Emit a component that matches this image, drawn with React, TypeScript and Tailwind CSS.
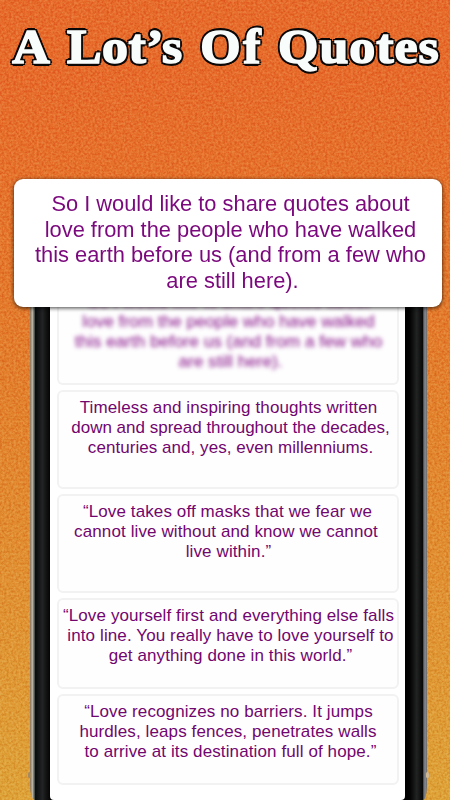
import React from "react";

type Line = { text: string; className?: string };

const INTRO: Line[] = [
  { text: "So I would like to share quotes about" },
  { text: "love from the people who have walked" },
  { text: "this earth before us (and from a few who" },
  { text: "are still here).", className: "pl-[4px]" },
];

function Grain() {
  return (
    <svg className="absolute inset-0 h-full w-full opacity-35 mix-blend-soft-light" aria-hidden="true">
      <filter id="grain" x="0" y="0" width="100%" height="100%" colorInterpolationFilters="sRGB">
        <feTurbulence type="fractalNoise" baseFrequency="0.43" numOctaves="2" seed="8" />
        <feColorMatrix type="matrix" values="1.8 0 0 0 -0.36  1.8 0 0 0 -0.36  1.8 0 0 0 -0.36  0 0 0 0 1" />
      </filter>
      <rect width="100%" height="100%" filter="url(#grain)" />
    </svg>
  );
}

function Lines({ lines }: { lines: Line[] }) {
  return (
    <>
      {lines.map((l) => (
        <span key={l.text} className={"block whitespace-nowrap " + (l.className ?? "")}>
          {l.text}
        </span>
      ))}
    </>
  );
}

function Card({ className, lines }: { className: string; lines: Line[] }) {
  return (
    <article
      className={
        "mt-[5px] flex w-[342px] shrink-0 flex-col items-center rounded-md border-2 border-[#f2f2f2] bg-[#fefefe] pt-[6px] text-center text-[17px] leading-[20.2px] tracking-[0.11px] text-[#72066f] " +
        className
      }
    >
      <p>
        <Lines lines={lines} />
      </p>
    </article>
  );
}

export default function App() {
  return (
    <main className="relative isolate flex h-[800px] w-[450px] flex-col items-center overflow-hidden bg-linear-to-b from-[#e66a29] from-10% via-[#e27c2a] via-45% to-[#dda136] font-['Liberation_Sans',Arial,sans-serif]">
      <Grain />
      <h1 className="relative z-10 flex h-[179px] w-full shrink-0 origin-left scale-x-106 whitespace-nowrap pl-[11.5px] pt-[17px] font-['Liberation_Serif',serif] text-[49px] font-bold leading-[60px] text-[#f8fcfb] [-webkit-text-stroke:1.6px_#f8fcfb] [text-shadow:2.6px_0_#0b0807,-2.6px_0_#0b0807,0_2.6px_#0b0807,0_-2.6px_#0b0807,2px_2px_#0b0807,-2px_2px_#0b0807,2px_-2px_#0b0807,-2px_-2px_#0b0807,0_0_2px_#0b0807]">
        <span className="w-[51.7px]">A</span>
        <span className="w-[125.8px] tracking-[0.4px]">Lot’s</span>
        <span className="w-[73.4px] tracking-[2.4px]">Of</span>
        <span className="tracking-[0.9px]">Quotes</span>
      </h1>

      <section className="relative z-20 ml-[6px] flex h-[128px] w-[428px] shrink-0 flex-col items-center rounded-[9px] bg-white pt-[12px] text-center text-[21.85px] leading-[25.5px] text-[#7b087d] shadow-[0_1px_4px_rgba(0,0,0,.75)]">
        <p className="pl-[5px]">
          <Lines lines={INTRO} />
        </p>
      </section>

      <section className="relative z-10 ml-[7px] flex h-[493px] w-[397px] shrink-0">
        <div className="h-full w-[5px] shrink-0 rounded-bl-[5px_14px] bg-linear-to-r from-[#8c755c] via-[#b8b2a3] to-[#333b3c]" />
        <div className="flex h-full w-[388px] shrink-0 bg-black">
          <div className="h-full w-[15px] shrink-0 bg-linear-to-r from-[#080b0c] via-[#222324] to-[#050505]" />
          <div className="flex h-full w-[355px] shrink-0 flex-col items-center rounded-b-[4px] bg-white">
            <div className="flex h-[78px] w-[342px] shrink-0 flex-col items-center rounded-b-md border-2 border-t-0 border-[#f2f2f2] bg-[#fefefe] text-center text-[17.2px] leading-[20px] text-[#850d88]">
              <p className="-mt-[16px] pl-[2px] blur-[2px]">
                <Lines lines={INTRO} />
              </p>
            </div>
            <Card
              className="h-[99px]"
              lines={[
                { text: "Timeless and inspiring thoughts written", className: "pl-[2px]" },
                { text: "down and spread throughout the decades,", className: "pl-[6px] tracking-[0px]" },
                { text: "centuries and, yes, even millenniums.", className: "pl-[6px] tracking-[0.05px]" },
              ]}
            />
            <Card
              className="h-[99px]"
              lines={[
                { text: "“Love takes off masks that we fear we" },
                { text: "cannot live without and know we cannot", className: "pr-[3px]" },
                { text: "live within.”", className: "pl-[2px]" },
              ]}
            />
            <Card
              className="h-[91px]"
              lines={[
                { text: "“Love yourself first and everything else falls", className: "pl-[2px]" },
                { text: "into line. You really have to love yourself to", className: "pl-[6px]" },
                { text: "get anything done in this world.”", className: "pl-[6px]" },
              ]}
            />
            <Card
              className="h-[91px]"
              lines={[
                { text: "“Love recognizes no barriers. It jumps", className: "pl-[2px]" },
                { text: "hurdles, leaps fences, penetrates walls", className: "pl-[1px]" },
                { text: "to arrive at its destination full of hope.”", className: "pl-[6px]" },
              ]}
            />
          </div>
          <div className="h-full w-[18px] shrink-0 bg-linear-to-r from-black via-[#222323] via-65% to-[#070707]" />
        </div>
        <div className="h-full w-[4px] shrink-0 rounded-br-[4px_14px] bg-linear-to-r from-[#3e4145] via-[#888c95] to-[#6e6b69]" />
        <i className="absolute -left-[2px] top-[465px] h-[6px] w-[3px] rounded-sm bg-[#a58a5f]" />
        <i className="absolute -right-[2px] top-[465px] h-[6px] w-[3px] rounded-sm bg-[#d0b894]" />
      </section>
    </main>
  );
}
